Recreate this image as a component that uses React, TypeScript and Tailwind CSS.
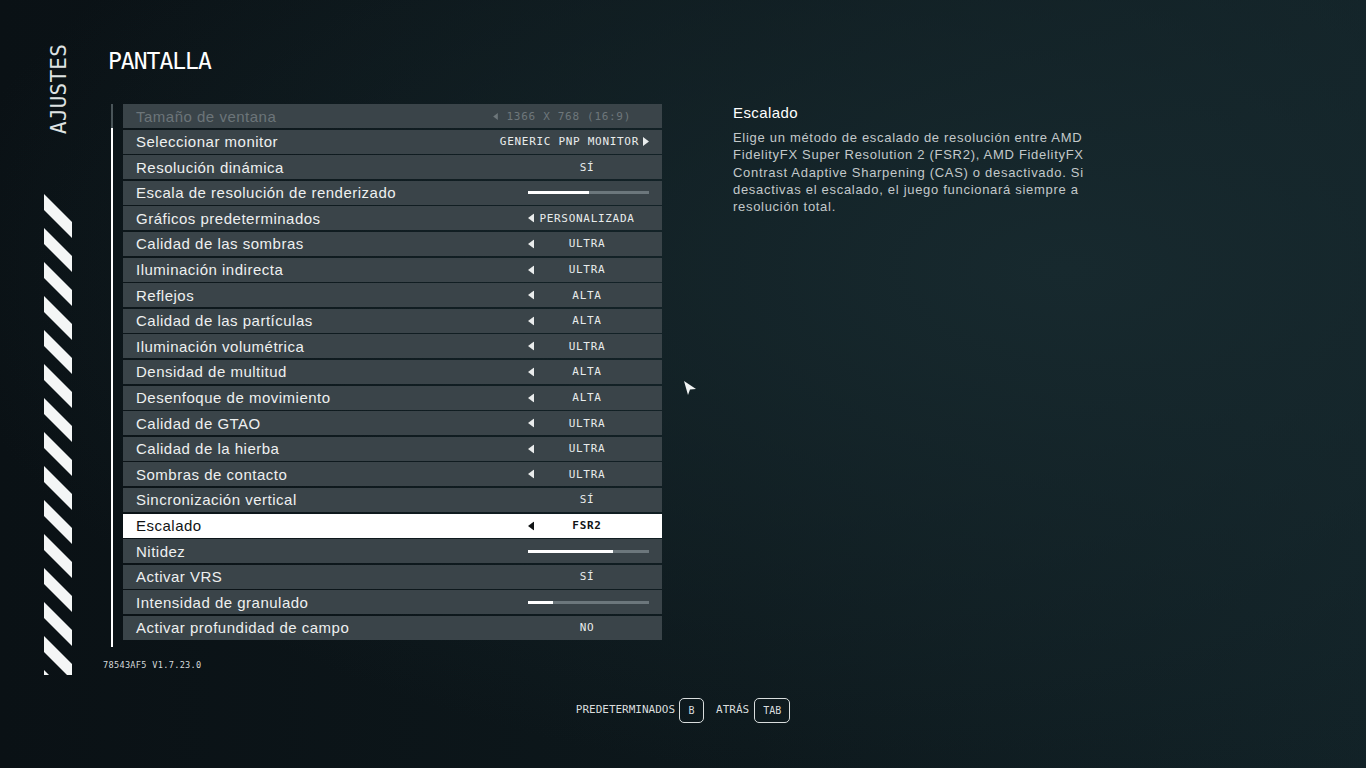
import React from 'react';

type Row = {
  label: string;
  kind: 'choice' | 'plain' | 'slider' | 'monitor' | 'window';
  value?: string;
  fill?: number;
  active?: boolean;
  disabled?: boolean;
};

const rows: Row[] = [
  { label: 'Tamaño de ventana', kind: 'window', value: '1366 X 768 (16:9)', disabled: true },
  { label: 'Seleccionar monitor', kind: 'monitor', value: 'GENERIC PNP MONITOR' },
  { label: 'Resolución dinámica', kind: 'plain', value: 'SÍ' },
  { label: 'Escala de resolución de renderizado', kind: 'slider', fill: 50 },
  { label: 'Gráficos predeterminados', kind: 'choice', value: 'PERSONALIZADA' },
  { label: 'Calidad de las sombras', kind: 'choice', value: 'ULTRA' },
  { label: 'Iluminación indirecta', kind: 'choice', value: 'ULTRA' },
  { label: 'Reflejos', kind: 'choice', value: 'ALTA' },
  { label: 'Calidad de las partículas', kind: 'choice', value: 'ALTA' },
  { label: 'Iluminación volumétrica', kind: 'choice', value: 'ULTRA' },
  { label: 'Densidad de multitud', kind: 'choice', value: 'ALTA' },
  { label: 'Desenfoque de movimiento', kind: 'choice', value: 'ALTA' },
  { label: 'Calidad de GTAO', kind: 'choice', value: 'ULTRA' },
  { label: 'Calidad de la hierba', kind: 'choice', value: 'ULTRA' },
  { label: 'Sombras de contacto', kind: 'choice', value: 'ULTRA' },
  { label: 'Sincronización vertical', kind: 'plain', value: 'SÍ' },
  { label: 'Escalado', kind: 'choice', value: 'FSR2', active: true },
  { label: 'Nitidez', kind: 'slider', fill: 70 },
  { label: 'Activar VRS', kind: 'plain', value: 'SÍ' },
  { label: 'Intensidad de granulado', kind: 'slider', fill: 21 },
  { label: 'Activar profundidad de campo', kind: 'plain', value: 'NO' },
];

const mono = "font-['DejaVu_Sans_Mono',monospace]";
const sans = "font-['Liberation_Sans',Arial,sans-serif]";

function Arrow({ dir = 'left', className = '' }: { dir?: 'left' | 'right'; className?: string }) {
  return (
    <svg width="6" height="9" viewBox="0 0 6 9" className={className}>
      {dir === 'left' ? <polygon points="6,0 6,9 0,4.5" fill="currentColor" /> : <polygon points="0,0 0,9 6,4.5" fill="currentColor" />}
    </svg>
  );
}

function Stripes() {
  const polys = [];
  for (let i = 0; i < 15; i++) {
    const y = i * 34;
    polys.push(<polygon key={i} points={`0,${y} 28,${y + 28} 28,${y + 44} 0,${y + 16}`} fill="#f4f6f6" />);
  }
  return (
    <svg width="28" height="481" viewBox="0 0 28 481">
      {polys}
    </svg>
  );
}

function Value({ row }: { row: Row }) {
  const txt = `${mono} text-[11px] tracking-[0.7px] leading-none whitespace-nowrap`;
  if (row.kind === 'slider') {
    return (
      <div className="pl-[14px] pr-[11px]">
        <div className="h-[3px] w-full bg-[#6c777c]">
          <div className="h-full bg-white" style={{ width: `${row.fill}%` }} />
        </div>
      </div>
    );
  }
  if (row.kind === 'window') {
    return (
      <div className={`flex items-center justify-end gap-[9px] pr-[29px] text-[#6e777b] ${txt}`}>
        <Arrow className="h-[7px] w-[5px] shrink-0" />
        <span className="shrink-0">{row.value}</span>
      </div>
    );
  }
  if (row.kind === 'monitor') {
    return (
      <div className={`flex items-center justify-end gap-[4px] pr-[11px] ${txt}`}>
        <span className="shrink-0">{row.value}</span>
        <Arrow dir="right" className="shrink-0" />
      </div>
    );
  }
  return (
    <div className="relative flex items-center justify-center">
      {row.kind === 'choice' && <Arrow className="absolute left-[14px] top-1/2 -translate-y-1/2" />}
      <span className={`${txt} ${row.active ? 'font-bold tracking-[0.2px]' : ''}`}>{row.value}</span>
    </div>
  );
}

export default function App() {
  return (
    <div className="relative h-[768px] w-[1366px] overflow-hidden bg-[radial-gradient(ellipse_at_78%_35%,#17292e_0%,#11202500_75%),linear-gradient(90deg,#0a1115_0%,#0d181c_55%,#122227_100%)] text-[#e9ecec]">
      <div className="flex">
        {/* barra lateral */}
        <aside className="flex w-[108px] shrink-0 flex-col items-center pt-[44px]">
          <div className={`${mono} ml-[10px] rotate-180 text-[21px] leading-none tracking-[0.2px] text-[#dfe3e3] [writing-mode:vertical-rl]`}>
            AJUSTES
          </div>
          <div className="ml-[8px] mt-[60px]">
            <Stripes />
          </div>
        </aside>

        <main className="flex-1 pt-[50px]">
          <h1 className={`${mono} text-[23px] leading-[23px] tracking-[-1px] text-white`}>PANTALLA</h1>

          <div className="mt-[31px] flex">
            <div className="ml-[3px] mr-[10px] flex w-[2px] shrink-0 flex-col">
              <div className="h-[24px] bg-[#4a5559]" />
              <div className="flex-1 bg-white" />
            </div>

            <div className="flex w-[539px] shrink-0 flex-col gap-[1.6px] pb-[7px]">
              {rows.map((r) => (
                <div
                  key={r.label}
                  className={`flex h-[24px] items-center justify-between pl-[13px] ${
                    r.active ? 'bg-white text-[#111415]' : 'bg-[#3a4449]'
                  }`}
                >
                  <span
                    className={`${sans} text-[15px] leading-none tracking-[0.5px] ${
                      r.disabled ? 'text-[#6c7579]' : r.active ? 'text-[#111415]' : 'text-[#eef0f0]'
                    }`}
                  >
                    {r.label}
                  </span>
                  <div className="mr-[2px] w-[146px]">
                    <Value row={r} />
                  </div>
                </div>
              ))}
            </div>

            <section className={`${sans} ml-[71px] w-[400px] shrink-0`}>
              <h2 className="text-[15px] leading-[18px] tracking-[0.4px] text-white">Escalado</h2>
              <p className="mt-[7px] text-[13px] leading-[17.3px] tracking-[0.7px] text-[#c3c9ca]">
                Elige un método de escalado de resolución entre AMD FidelityFX Super Resolution 2 (FSR2), AMD FidelityFX
                Contrast Adaptive Sharpening (CAS) o desactivado. Si desactivas el escalado, el juego funcionará siempre a
                resolución total.
              </p>
            </section>
          </div>

          <div className={`${mono} -ml-[5px] mt-[14px] text-[8.6px] leading-none tracking-[0.3px] text-[#d5d9da]`}>
            78543AF5 V1.7.23.0
          </div>
        </main>
      </div>

      <footer className={`${mono} mt-[23px] flex items-center justify-center text-[11px] tracking-[0px] text-[#d9dddd]`}>
        <span>PREDETERMINADOS</span>
        <span className="ml-[4px] flex h-[25px] w-[25px] items-center justify-center rounded-[5px] border border-[#d9dddd] text-[10px]">B</span>
        <span className="ml-[12px]">ATRÁS</span>
        <span className="ml-[5px] flex h-[25px] w-[36px] items-center justify-center rounded-[5px] border border-[#d9dddd] text-[10px]">TAB</span>
      </footer>

      {/* puntero del ratón */}
      <svg className="absolute left-[683px] top-[380px]" width="14" height="16" viewBox="0 0 14 16">
        <polygon points="1,1 13,9 7,9.5 5,15" fill="#f2f4f4" />
      </svg>
    </div>
  );
}
